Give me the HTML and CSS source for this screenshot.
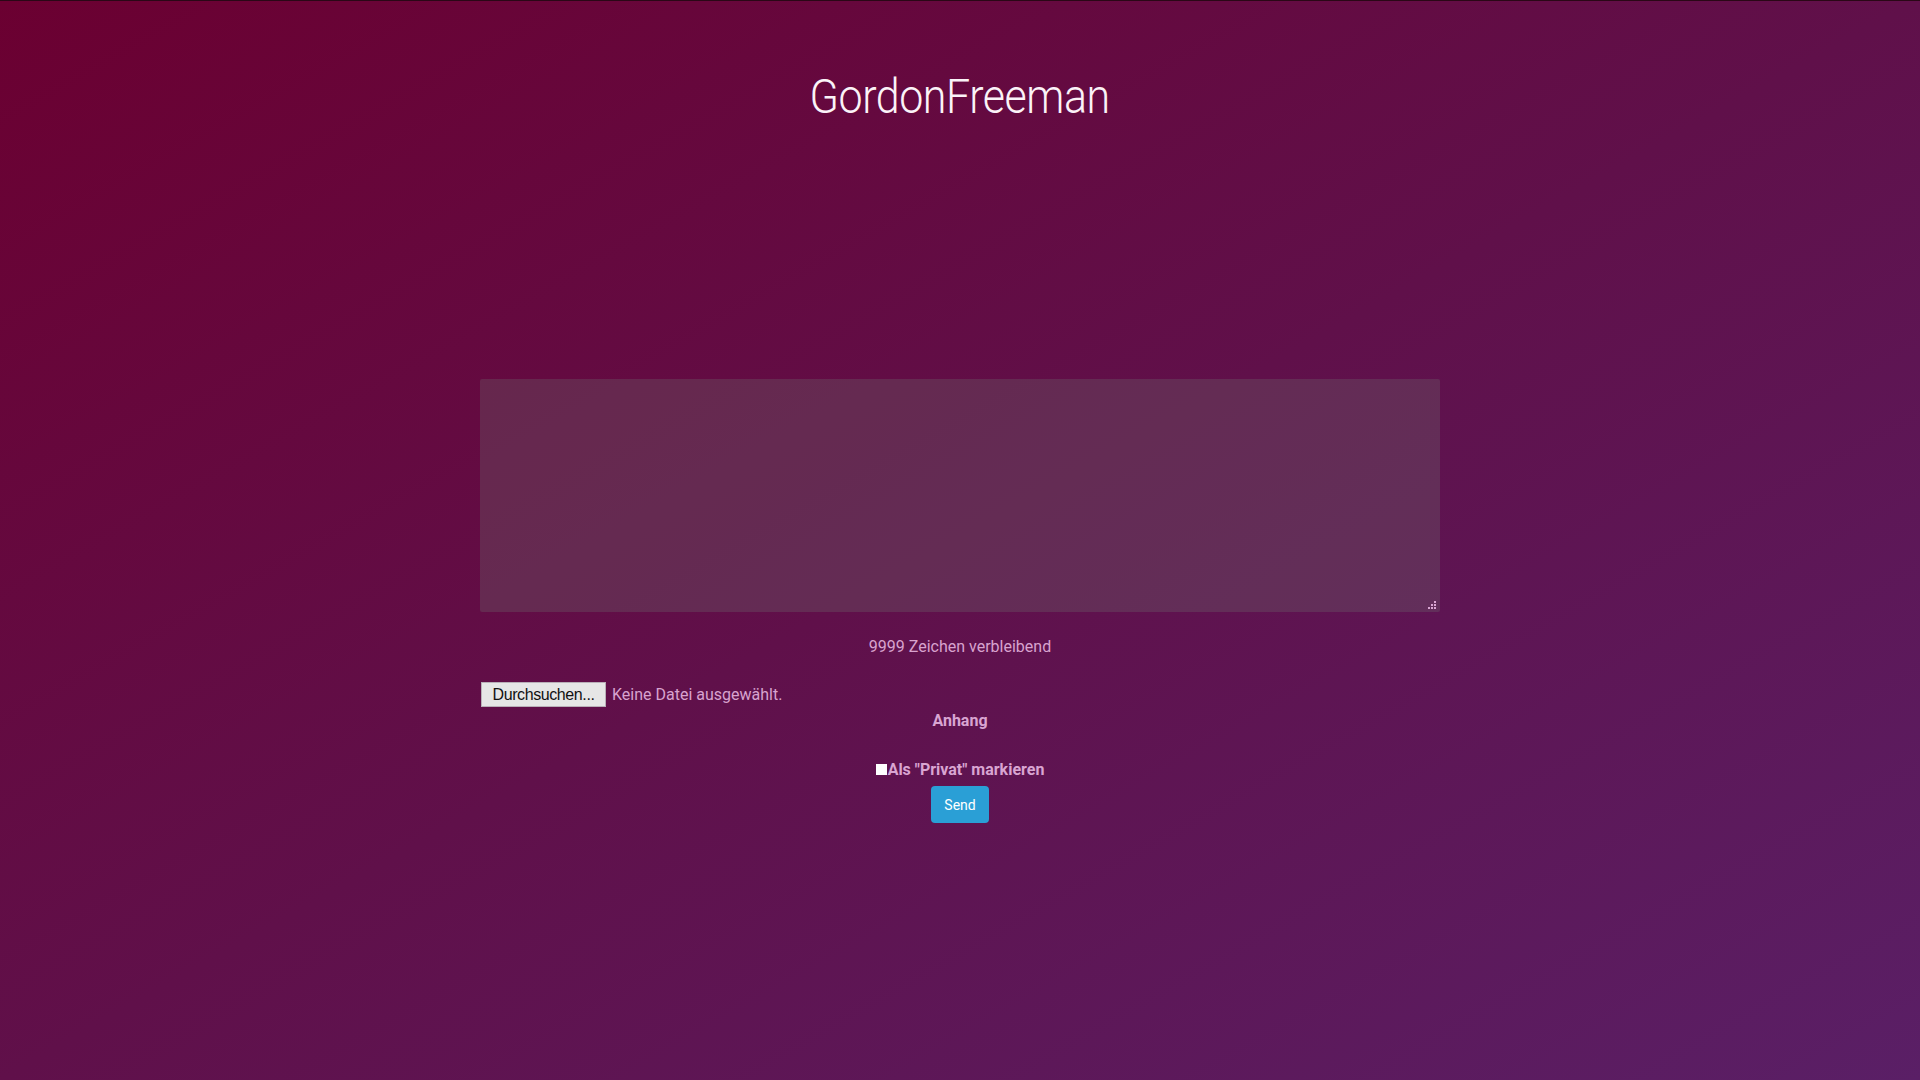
FILE: index.html
```html
<!DOCTYPE html>
<html lang="de">
<head>
<meta charset="utf-8">
<title>GordonFreeman</title>
<link rel="stylesheet" href="styles.css">
</head>
<body>
<div class="page">
  <h1 class="title"><span class="title-text">GordonFreeman</span></h1>
  <form class="compose">
    <div class="area-wrap">
      <textarea class="message"></textarea>
      <svg class="grip" width="9" height="9" viewBox="0 0 9 9">
        <rect x="6" y="0" width="2" height="2"/>
        <rect x="3" y="3" width="2" height="2"/>
        <rect x="6" y="3" width="2" height="2"/>
        <rect x="0" y="6" width="2" height="2"/>
        <rect x="3" y="6" width="2" height="2"/>
        <rect x="6" y="6" width="2" height="2"/>
      </svg>
    </div>
    <div class="counter">9999 Zeichen verbleibend</div>
    <div class="file-row">
      <span class="file-btn">Durchsuchen...</span>
      <span class="file-name">Keine Datei ausgewählt.</span>
    </div>
    <div class="label">Anhang</div>
    <label class="check-row"><input type="checkbox" class="check"><span>Als "Privat" markieren</span></label>
    <div class="actions"><button type="button" class="send">Send</button></div>
  </form>
</div>
</body>
</html>
```
FILE: styles.css
```css
html, body {
  margin: 0;
  padding: 0;
}
body {
  min-height: 100vh;
  background: linear-gradient(to bottom right, #6b0031 0%, #60104a 50%, #5a1f66 100%);
  font-family: Roboto, "Liberation Sans", sans-serif;
  border-top: 1px solid #2a0716;
  box-sizing: border-box;
}
.page {
  padding-top: 67px;
}
.title {
  margin: 0;
  text-align: center;
  font-family: Roboto, sans-serif;
  font-weight: 300;
  font-size: 48px;
  line-height: normal;
  color: #fbf3f8;
}
.title-text {
  display: inline-block;
  letter-spacing: -0.5px;
  transform: scaleX(0.895);
}
.compose {
  width: 960px;
  margin: 254px auto 0;
}
.area-wrap {
  position: relative;
}
.message {
  display: block;
  width: 960px;
  height: 233px;
  box-sizing: border-box;
  border: none;
  border-radius: 2px;
  background: rgba(110, 110, 110, 0.3);
  resize: none;
  outline: none;
  margin: 0;
  padding: 6px;
}
.grip {
  position: absolute;
  right: 3px;
  bottom: 2px;
  fill: #d9a5d2;
}
.counter {
  margin-top: 23px;
  text-align: center;
  font-size: 16px;
  line-height: 24px;
  color: #d8a3cf;
}
.file-row {
  margin-top: 23px;
  display: flex;
  align-items: center;
  gap: 6px;
  padding-left: 1px;
}
.file-btn {
  display: inline-flex;
  align-items: center;
  justify-content: center;
  width: 125px;
  height: 25px;
  box-sizing: border-box;
  background: #e6e6e6;
  border: 1px solid #b9b0b8;
  color: #111;
  font-family: "Liberation Sans", Arial, sans-serif;
  font-size: 16px;
  letter-spacing: -0.4px;
}
.file-name {
  font-size: 16px;
  color: #d8a3cf;
}
.label {
  margin-top: 2px;
  text-align: center;
  font-weight: 700;
  font-size: 16px;
  line-height: 24px;
  color: #d9a5d2;
}
.check-row {
  margin-top: 25px;
  display: flex;
  justify-content: center;
  align-items: center;
  font-weight: 700;
  font-size: 16px;
  line-height: 24px;
  color: #d9a5d2;
}
.check {
  appearance: none;
  -webkit-appearance: none;
  width: 11px;
  height: 11px;
  margin: 0 1px 2px 0;
  background: #fff;
  border: none;
}
.actions {
  margin-top: 4px;
  display: flex;
  justify-content: center;
}
.send {
  height: 37px;
  padding: 0 13px;
  border: none;
  border-radius: 4px;
  background: #2a9fd6;
  color: #fff;
  font-family: Roboto, sans-serif;
  font-size: 14px;
}
```
